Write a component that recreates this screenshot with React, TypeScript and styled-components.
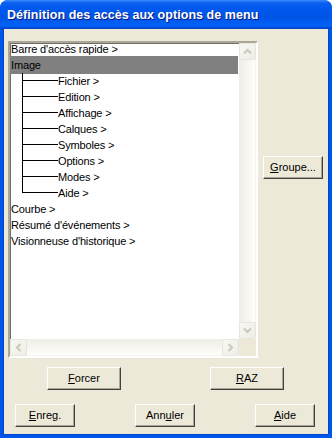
import React from 'react';
import styled, { createGlobalStyle } from 'styled-components';

const GlobalStyle = createGlobalStyle`
  html, body {
    margin: 0;
    padding: 0;
    background: #ffffff;
  }
  * {
    box-sizing: border-box;
  }
`;

const Window = styled.div`
  width: 332px;
  height: 438px;
  display: flex;
  flex-direction: column;
  background: #0055ea;
  border-radius: 8px 8px 0 0;
  overflow: hidden;
  font-family: 'Liberation Sans', Arial, sans-serif;
  font-size: 11px;
  color: #000;
`;

const TitleBar = styled.div`
  height: 29px;
  flex-shrink: 0;
  display: flex;
  align-items: center;
  padding: 1px 0 0 7px;
  background: linear-gradient(
    #3b8cf8 0%,
    #0a5ff0 10%,
    #0058ee 30%,
    #0054e6 60%,
    #0062f8 88%,
    #0050dd 95%,
    #003cbc 100%
  );
`;

const Title = styled.span`
  color: #fff;
  font-weight: 700;
  font-size: 12.5px;
  letter-spacing: 0.05px;
  text-shadow: 1px 1px #0a1a80;
`;

const Body = styled.div`
  flex: 1;
  margin: 0 4px 4px 4px;
  background: #ece9d8;
  box-shadow: 0 0 0 1px #0046cc;
  display: flex;
  flex-direction: column;
  padding: 12px 0 0 4px;
`;

const TopRow = styled.div`
  display: flex;
  align-items: flex-start;
  gap: 5px;
`;

const ListBox = styled.div`
  width: 250px;
  height: 317px;
  display: grid;
  grid-template-columns: 1fr 17px;
  grid-template-rows: 1fr 17px;
  border-style: solid;
  border-width: 2px;
  border-color: #aca899 #ffffff #ffffff #aca899;
  box-shadow: inset 1px 1px #716f64, inset -1px -1px #f1efe2;
  background: #fff;
`;

const TreeArea = styled.div`
  overflow: hidden;
`;

const Tree = styled.div`
  margin-top: -2px;
  display: flex;
  flex-direction: column;
  letter-spacing: -0.15px;
`;

const Row = styled.div<{ $selected?: boolean }>`
  height: 16px;
  line-height: 16px;
  white-space: nowrap;
  padding-left: 1px;
  background: ${({ $selected }) => ($selected ? '#808080' : 'transparent')};
  box-shadow: ${({ $selected }) => ($selected ? '0 1px #808080, 0 -1px #808080' : 'none')};
  margin-right: 1px;
`;

const ChildRow = styled.div`
  height: 16px;
  line-height: 16px;
  display: flex;
  padding-left: 12px;
  white-space: nowrap;
`;

const Connector = styled.span<{ $last?: boolean }>`
  width: 36px;
  height: 16px;
  flex-shrink: 0;
  background:
    linear-gradient(#000, #000) 0 0 / 1px ${({ $last }) => ($last ? '8px' : '16px')} no-repeat,
    linear-gradient(#000, #000) 0 7px / 36px 1px no-repeat;
`;

const VScroll = styled.div`
  display: flex;
  flex-direction: column;
  justify-content: space-between;
  background: linear-gradient(90deg, #eeede5 0%, #f7f6f1 50%, #fdfdfa 90%, #f3f1ea 100%);
`;

const HScroll = styled.div`
  display: flex;
  justify-content: space-between;
  background: linear-gradient(#eeede5 0%, #f7f6f1 50%, #fdfdfa 90%, #f3f1ea 100%);
`;

const Corner = styled.div`
  background: #ece9d8;
`;

const ScrollButton = styled.div`
  width: 17px;
  height: 17px;
  border: 1px solid #e8e6dc;
  border-radius: 2px;
  background: linear-gradient(135deg, #f8f8f4, #eeede6);
  display: flex;
  align-items: center;
  justify-content: center;
`;

const SideColumn = styled.div`
  padding-top: 115px;
`;

const Button = styled.button<{ $w?: number }>`
  width: ${({ $w }) => $w ?? 60}px;
  height: 23px;
  padding: 0;
  margin: 0;
  font-family: 'Liberation Sans', Arial, sans-serif;
  font-size: 11px;
  color: #000;
  background: #ece9d8;
  border-style: solid;
  border-width: 1px;
  border-color: #ffffff #404040 #404040 #ffffff;
  box-shadow: inset -1px -1px #aca899;
  line-height: 19px;
  cursor: default;

  u {
    text-decoration: underline;
    text-underline-offset: 1px;
  }
`;

const ForceRow = styled.div`
  display: flex;
  gap: 89px;
  padding-left: 39px;
  margin-top: 9px;
`;

const FootRow = styled.div`
  display: flex;
  gap: 60px;
  padding-left: 7px;
  margin-top: 14px;
`;

const Chevron: React.FC<{ dir: 'up' | 'down' | 'left' | 'right' }> = ({ dir }) => {
  const rot = { up: 0, right: 90, down: 180, left: 270 }[dir];
  return (
    <svg width="9" height="9" viewBox="0 0 9 9" style={{ transform: `rotate(${rot}deg)` }}>
      <path d="M1 6.5 L4.5 3 L8 6.5" fill="none" stroke="#c9c7ba" strokeWidth="2" />
    </svg>
  );
};

const children = ['Fichier', 'Edition', 'Affichage', 'Calques', 'Symboles', 'Options', 'Modes', 'Aide'];

export default function App() {
  return (
    <>
      <GlobalStyle />
      <Window>
        <TitleBar>
          <Title>Définition des accès aux options de menu</Title>
        </TitleBar>
        <Body>
          <TopRow>
            <ListBox>
              <TreeArea>
                <Tree>
                  <Row>Barre d'accès rapide &gt;</Row>
                  <Row $selected>Image</Row>
                  {children.map((c, i) => (
                    <ChildRow key={c}>
                      <Connector $last={i === children.length - 1} />
                      {c} &gt;
                    </ChildRow>
                  ))}
                  <Row>Courbe &gt;</Row>
                  <Row>Résumé d'événements &gt;</Row>
                  <Row>Visionneuse d'historique &gt;</Row>
                </Tree>
              </TreeArea>
              <VScroll>
                <ScrollButton>
                  <Chevron dir="up" />
                </ScrollButton>
                <ScrollButton>
                  <Chevron dir="down" />
                </ScrollButton>
              </VScroll>
              <HScroll>
                <ScrollButton>
                  <Chevron dir="left" />
                </ScrollButton>
                <ScrollButton>
                  <Chevron dir="right" />
                </ScrollButton>
              </HScroll>
              <Corner />
            </ListBox>
            <SideColumn>
              <Button>
                <u>G</u>roupe...
              </Button>
            </SideColumn>
          </TopRow>
          <ForceRow>
            <Button $w={74}>
              <u>F</u>orcer
            </Button>
            <Button $w={74}>
              <u>R</u>AZ
            </Button>
          </ForceRow>
          <FootRow>
            <Button>
              <u>E</u>nreg.
            </Button>
            <Button>
              Ann<u>u</u>ler
            </Button>
            <Button>
              <u>A</u>ide
            </Button>
          </FootRow>
        </Body>
      </Window>
    </>
  );
}
